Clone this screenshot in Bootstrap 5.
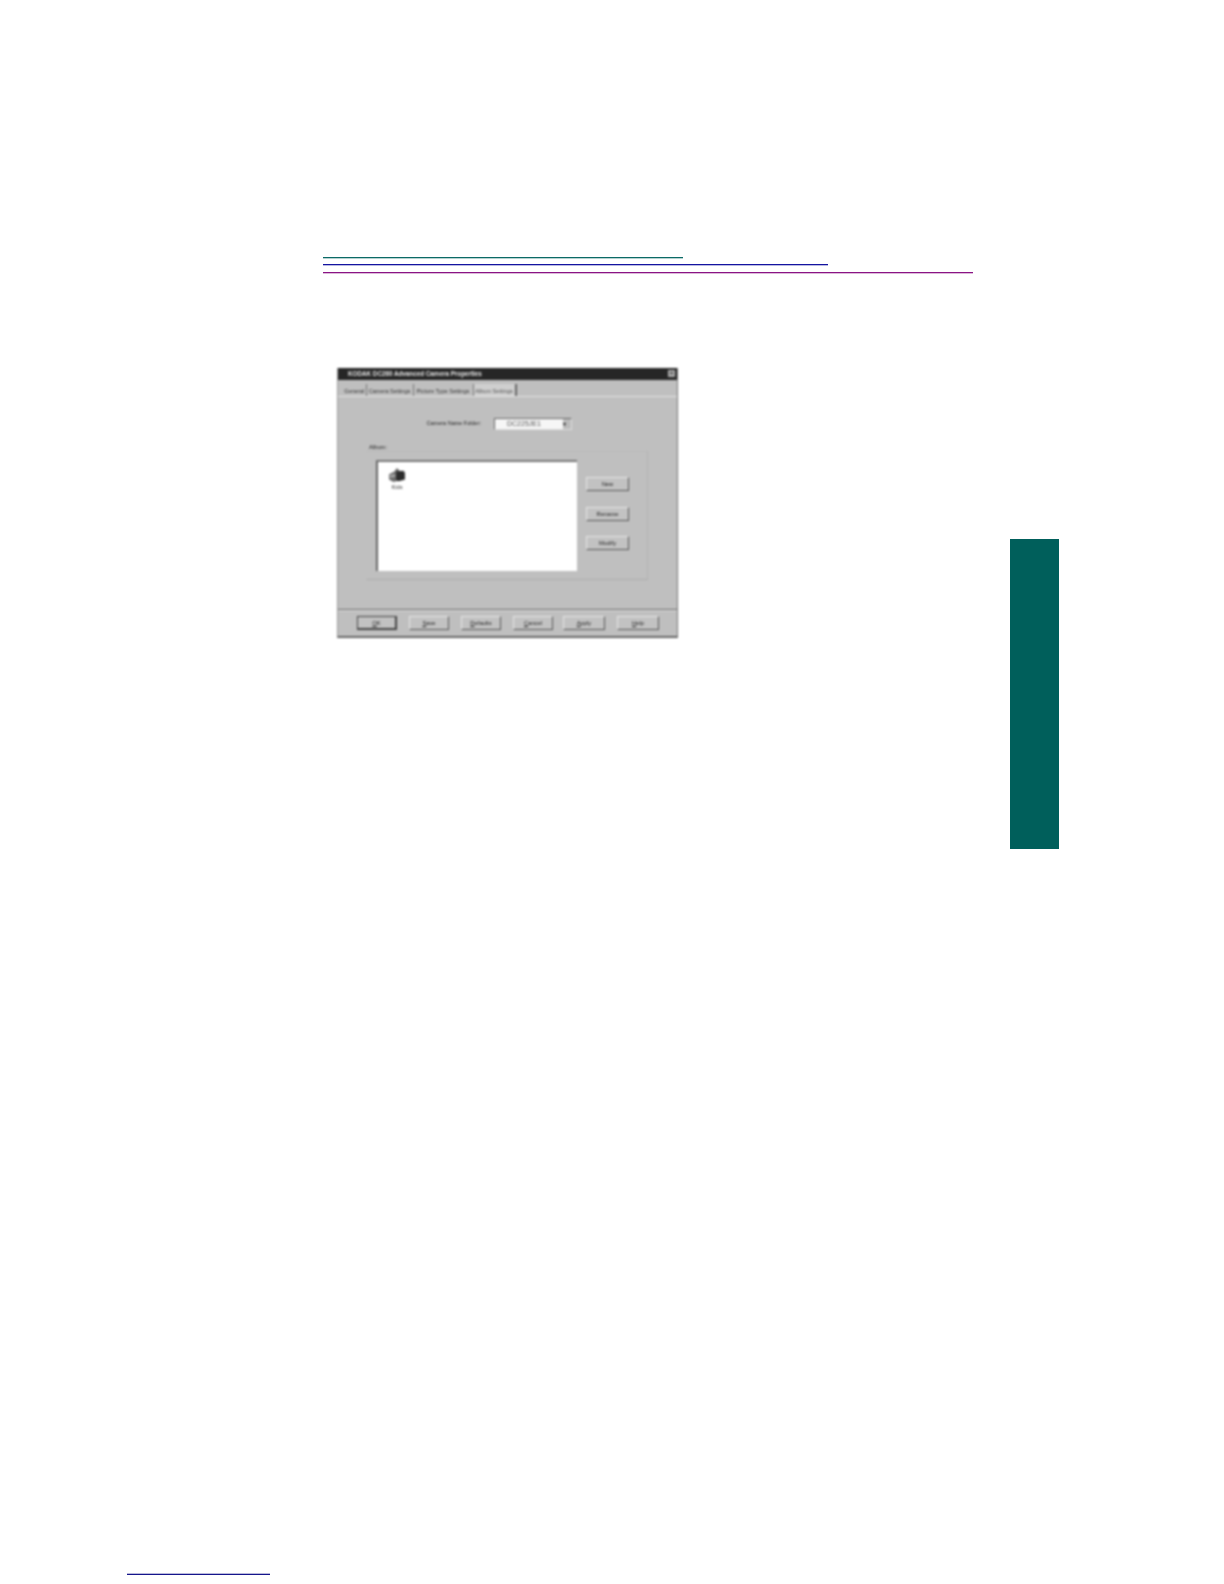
<!DOCTYPE html>
<html lang="en">
<head>
<meta charset="utf-8">
<title>KODAK DC260 Advanced Camera Properties</title>
<link href="https://cdn.jsdelivr.net/npm/bootstrap@5.3.0/dist/css/bootstrap.min.css" rel="stylesheet">
<style>
html,body{margin:0;background:#fff;}
body{font-family:"Liberation Sans",Arial,sans-serif;}
.sheet{width:1224px;height:1584px;}
.main-col{width:1010px;height:1584px;padding-top:257px;padding-left:323px;}
.rule{height:1px;}
.rule-teal{width:360px;background:#0b6a66;box-shadow:0 1px 0 rgba(11,106,102,.3);margin-bottom:6px;}
.rule-blue{width:505px;background:#1414a0;box-shadow:0 1px 0 rgba(20,20,160,.3);margin-bottom:7px;}
.rule-purple{width:650px;background:#8a1484;box-shadow:0 1px 0 rgba(138,20,132,.3);}
.foot-rule{width:143px;height:1px;background:#16168c;box-shadow:0 -1px 0 rgba(22,22,140,.3);margin-left:-196px;margin-bottom:9px;}
.side-tab{width:49px;height:310px;margin-top:539px;background:#005f5b;}
.dlg{width:341px;height:269.5px;margin-top:95px;margin-left:14px;background:#bfbfbf;filter:blur(.9px);font-size:5.8px;color:#222;
  border-right:1px solid #777;border-bottom:2px solid #666;border-left:1px solid #999;}
.dlg-title{height:11.5px;background:#262626;color:#e8e8e8;font-weight:700;font-size:6.3px;line-height:11.5px;padding-left:10px;}
.dlg-x{width:7px;height:7px;background:#aaa;color:#222;line-height:7px;font-size:6px;text-align:center;margin-right:2px;}
.tabs-strip{height:17px;padding:4px 0 0 5px;border-bottom:1px solid #e4e4e4;flex-wrap:nowrap;gap:0;}
.tabs-strip .nav-link{padding:0;height:12px;line-height:14.5px;font-size:5.6px;color:#333;border:0;border-right:1px solid #777;border-radius:0;background:transparent;text-align:center;margin:0;}
.tabs-strip .nav-link.active{background:#cfcfcf;color:#555;border-right:2px solid #666;}
.tab-a{width:23.5px;}.tab-b{width:47px;}.tab-c{width:60px;}.tab-d{width:43px;}
.dlg-body{height:212px;padding-left:28px;padding-right:29px;}
.name-row{padding:21px 0 0 60px;height:33px;gap:13px;}
.name-lbl{width:55px;text-align:right;white-space:nowrap;font-size:5.5px;line-height:10px;}
.fake-select{width:78px;height:12px;background:#f6f6f6;border:1px solid;border-color:#666 #ddd #ddd #666;line-height:10px;font-size:7px;color:#555;}
.sel-text{text-align:left;padding-left:12px;}
.sel-arrow{width:8px;height:10px;background:#bbb;color:#222;font-size:6px;line-height:10px;margin-left:auto;}
.album-lbl{height:9px;line-height:9px;margin-top:13px;padding-left:3px;}
.grp{height:129px;padding:8px 0 0 9px;gap:9px;border:1px solid;border-color:#bababa #b2b2b2 #acacac transparent;margin-top:-1px;}
.album-list{width:201px;height:111px;background:#fff;border-left:2px solid #666;border-top:2px solid #777;padding:6px 0 0 9px;}
.album-item{width:20px;font-size:5.6px;line-height:8px;text-align:center;color:#333;}
.album-item svg{display:block;width:20px;height:15px;margin-bottom:.5px;}
.btn-col{padding-top:17.5px;gap:15.5px;}
.win-btn{width:43px;height:14px;padding:0;font-size:5.8px;line-height:12px;color:#222;background:#c2c2c2;border:1px solid;border-color:#e6e6e6 #555 #555 #e6e6e6;border-radius:0;}
.win-btn-wide{width:40px;}
.win-btn-def{border-color:#444;border-width:1px 2px 2px 1px;}
.dlg-foot{height:28px;padding:6px 0 0 19px;gap:12px;border-top:1px solid #666;box-shadow:inset 0 1px 0 #e0e0e0;}
.gap-less{margin-left:-2px;}
.win-btn-w2{width:42px;}
</style>
</head>
<body>
<div class="sheet d-flex">
  <div class="main-col d-flex flex-column">
    <div class="rule rule-teal"></div>
    <div class="rule rule-blue"></div>
    <div class="rule rule-purple"></div>
    <div class="dlg">
      <div class="dlg-title d-flex justify-content-between align-items-center">
        <span>KODAK DC260 Advanced Camera Properties</span>
        <span class="dlg-x">×</span>
      </div>
      <ul class="nav nav-tabs tabs-strip">
        <li class="nav-item"><a class="nav-link tab-a" href="#">General</a></li>
        <li class="nav-item"><a class="nav-link tab-b" href="#">Camera Settings</a></li>
        <li class="nav-item"><a class="nav-link tab-c" href="#">Picture Type Settings</a></li>
        <li class="nav-item"><a class="nav-link tab-d active" href="#">Album Settings</a></li>
      </ul>
      <div class="dlg-body">
        <div class="name-row d-flex">
          <span class="name-lbl">Camera Name Folder:</span>
          <div class="fake-select d-flex"><span class="flex-grow-1 sel-text">DC225JE1</span><span class="sel-arrow">▾</span></div>
        </div>
        <div class="album-lbl">Album:</div>
        <div class="grp d-flex">
          <div class="album-list">
            <div class="album-item">
              <svg viewBox="0 0 20 17" aria-hidden="true">
                <path d="M1 7 L7 4 L10 0 L13 3 L13 14 L6 16 L1 13 Z" fill="#6a6a6a"/>
                <path d="M9 4 L17 3 L19 5 L19 13 L12 15 L9 14 Z" fill="#2c2c2c"/>
                <path d="M2 8 L8 7 L8 10 L2 11 Z" fill="#a8a8a8"/>
              </svg>
              Kids
            </div>
          </div>
          <div class="btn-col d-flex flex-column">
            <button type="button" class="btn win-btn">New</button>
            <button type="button" class="btn win-btn">Rename</button>
            <button type="button" class="btn win-btn">Modify</button>
          </div>
        </div>
      </div>
      <div class="dlg-foot d-flex">
        <button type="button" class="btn win-btn win-btn-wide win-btn-def"><u>O</u>K</button>
        <button type="button" class="btn win-btn win-btn-wide"><u>S</u>ave</button>
        <button type="button" class="btn win-btn win-btn-wide"><u>D</u>efaults</button>
        <button type="button" class="btn win-btn win-btn-wide"><u>C</u>ancel</button>
        <button type="button" class="btn win-btn win-btn-w2 gap-less"><u>A</u>pply</button>
        <button type="button" class="btn win-btn win-btn-w2"><u>H</u>elp</button>
      </div>
    </div>
    <div class="foot-rule mt-auto"></div>
  </div>
  <div class="side-tab"></div>
</div>
<script src="https://cdn.jsdelivr.net/npm/bootstrap@5.3.0/dist/js/bootstrap.bundle.min.js"></script>
</body>
</html>
